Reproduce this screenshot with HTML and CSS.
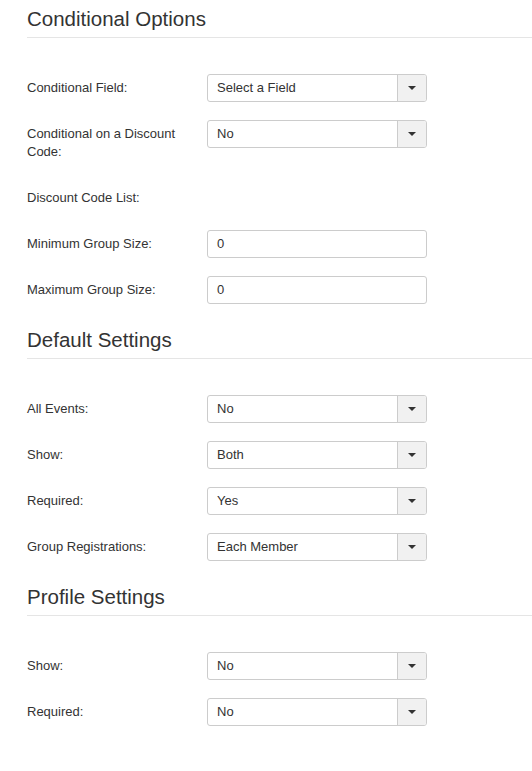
FILE: index.html
```html
<!DOCTYPE html>
<html>
<head>
<meta charset="utf-8">
<link rel="stylesheet" href="styles.css">
</head>
<body>
<div class="page">
  <section class="sec">
    <h2 class="sec-title">Conditional Options</h2>
    <div class="row"><div class="label">Conditional Field:</div><div class="select"><span class="val">Select a Field</span><span class="btn"><span class="caret"></span></span></div></div>
    <div class="row row-wide"><div class="label">Conditional on a Discount Code:</div><div class="select"><span class="val">No</span><span class="btn"><span class="caret"></span></span></div></div>
    <div class="row row-empty"><div class="label">Discount Code List:</div></div>
    <div class="row"><div class="label">Minimum Group Size:</div><div class="input">0</div></div>
    <div class="row"><div class="label">Maximum Group Size:</div><div class="input">0</div></div>
  </section>
  <section class="sec">
    <h2 class="sec-title">Default Settings</h2>
    <div class="row"><div class="label">All Events:</div><div class="select"><span class="val">No</span><span class="btn"><span class="caret"></span></span></div></div>
    <div class="row"><div class="label">Show:</div><div class="select"><span class="val">Both</span><span class="btn"><span class="caret"></span></span></div></div>
    <div class="row"><div class="label">Required:</div><div class="select"><span class="val">Yes</span><span class="btn"><span class="caret"></span></span></div></div>
    <div class="row"><div class="label">Group Registrations:</div><div class="select"><span class="val">Each Member</span><span class="btn"><span class="caret"></span></span></div></div>
  </section>
  <section class="sec">
    <h2 class="sec-title">Profile Settings</h2>
    <div class="row"><div class="label">Show:</div><div class="select"><span class="val">No</span><span class="btn"><span class="caret"></span></span></div></div>
    <div class="row"><div class="label">Required:</div><div class="select"><span class="val">No</span><span class="btn"><span class="caret"></span></span></div></div>
  </section>
</div>
</body>
</html>
```
FILE: styles.css
```css
* { box-sizing: border-box; }
html, body { margin: 0; padding: 0; background: #fff; }
body {
  font-family: "Liberation Sans", Arial, Helvetica, sans-serif;
  color: #333;
  font-size: 13px;
}
.page { padding: 1px 0 20px 27px; }
.sec { padding-top: 6px; }
.sec-title {
  margin: 0 0 36px 0;
  font-size: 20.5px;
  line-height: 24px;
  font-weight: normal;
  color: #333;
  padding-bottom: 6px;
  border-bottom: 1px solid #e5e5e5;
}
.row {
  display: flex;
  align-items: flex-start;
  margin-bottom: 18px;
}
.row-wide { margin-bottom: 23px; }
.row-empty { min-height: 28px; }
.label {
  width: 180px;
  flex: none;
  padding: 5px 10px 0 0;
  line-height: 18px;
}
.select, .input {
  width: 220px;
  height: 28px;
  border: 1px solid #ccc;
  border-radius: 3px;
  display: flex;
  align-items: center;
  background: #fff;
  line-height: 18px;
}
.input { padding-left: 9px; }
.val { flex: 1; padding-left: 9px; }
.btn {
  width: 29px;
  height: 100%;
  border-left: 1px solid #ccc;
  background: #f1f1f1;
  border-radius: 0 2px 2px 0;
  display: flex;
  align-items: center;
  justify-content: center;
}
.caret {
  width: 0;
  height: 0;
  border-left: 4px solid transparent;
  border-right: 4px solid transparent;
  border-top: 4px solid #333;
}
```
